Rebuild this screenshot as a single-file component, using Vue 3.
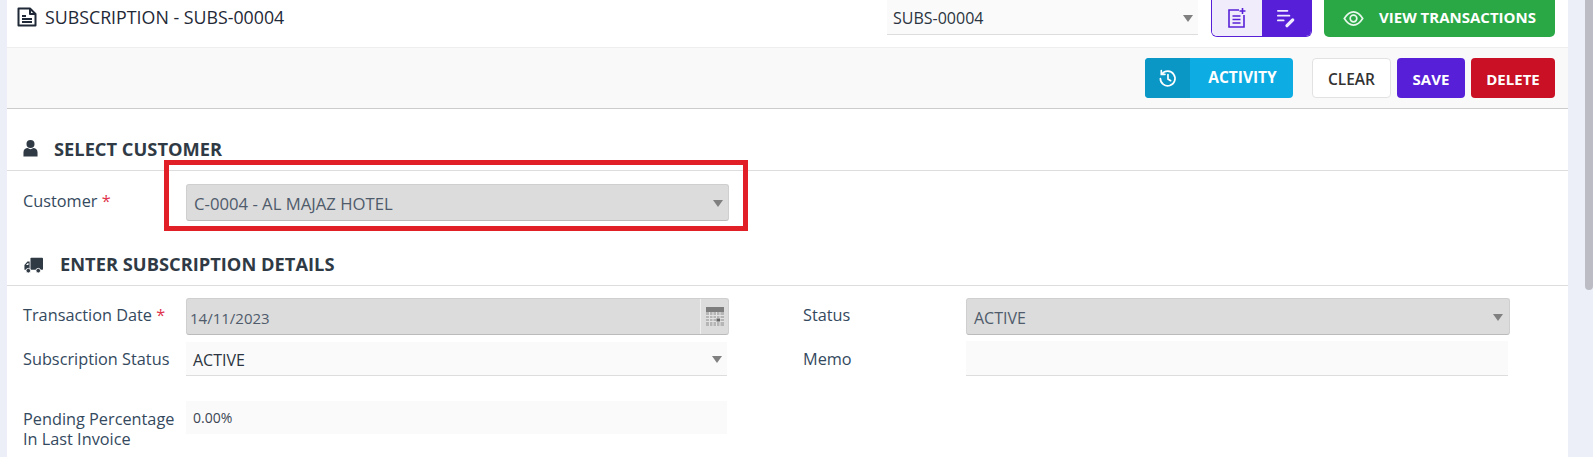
<script setup>
</script>

<template>
  <div class="page">
    <div class="edge"></div>
    <main class="main">
      <header class="top">
        <div class="title">
          <svg class="doc" viewBox="0 0 20 20" width="20" height="20" fill="none" stroke="#1f2937" stroke-width="2" stroke-linejoin="round">
            <path d="M1.500 1.500h11.500l5.500 5.500v11.500H1.500z" />
            <path d="M13 1.500V7h5.500" />
            <path d="M5 9h4M5 12h10M5 15h10" />
          </svg>
          <span>SUBSCRIPTION - SUBS-00004</span>
        </div>
        <div class="select plain top-select"><span>SUBS-00004</span><i class="caret"></i></div>
        <div class="toggle">
          <span class="tg-a">
            <svg viewBox="0 0 20 22" width="20" height="22" fill="none" stroke="#5720d8" stroke-width="1.6">
              <path d="M12 3H2v17h15V8" />
              <path d="M15.500 1v6M12.500 4h6M5.500 9h8M5.500 12.500h8M5.500 16h8" />
            </svg>
          </span>
          <span class="tg-b">
            <svg viewBox="0 0 22 22" width="21" height="21" fill="none" stroke="#f1ebff" stroke-width="1.900" stroke-linecap="round">
              <path d="M2 3h10M2 8h12M2 13h6" />
              <path d="M11.500 18.500l6-6" stroke-width="3.400" />
            </svg>
          </span>
        </div>
        <button class="btn green">
          <svg viewBox="0 0 24 18" width="21" height="17" fill="none" stroke="#e8f7ec" stroke-width="1.900">
            <path d="M1.500 9C5 3.500 8.500 1.500 12 1.500S19 3.500 22.500 9C19 14.500 15.500 16.500 12 16.500S5 14.500 1.500 9z" />
            <circle cx="12" cy="9" r="3.800" />
          </svg>
          <span class="green-text">VIEW TRANSACTIONS</span>
        </button>
      </header>

      <div class="toolbar">
        <button class="btn activity">
          <span class="ac-icon">
            <svg viewBox="0 0 20 20" width="19" height="19" fill="none" stroke="#fff" stroke-width="1.800" stroke-linecap="round">
              <path d="M4.200 5.200A7.700 7.700 0 1 1 2.500 10" />
              <path d="M3.500 1.800v3.800h3.800" />
              <path d="M10.500 6v4.500l2.800 1.800" />
            </svg>
          </span>
          <span class="ac-text">ACTIVITY</span>
        </button>
        <button class="btn clear">CLEAR</button>
        <button class="btn save">SAVE</button>
        <button class="btn delete">DELETE</button>
      </div>

      <section class="section-head head-one">
        <svg viewBox="0 0 16 18" width="15" height="18" fill="#2f3a45">
          <circle cx="8" cy="4.800" r="4.300" />
          <path d="M0.500 18v-4.500C.5 10.500 3 9 5 9c1 .8 2 1.200 3 1.200S10 9.800 11 9c2 0 4.500 1.500 4.500 4.500V18z" />
        </svg>
        <h2>SELECT CUSTOMER</h2>
      </section>

      <div class="row row-customer">
        <label class="lbl">Customer <em>*</em></label>
        <div class="field-wrap">
          <div class="select off"><span>C-0004 - AL MAJAZ HOTEL</span><i class="caret"></i></div>
          <div class="annotation"></div>
        </div>
      </div>

      <section class="section-head head-two">
        <svg class="truck" viewBox="0 0 22 18" width="19" height="17" fill="#2f3a45">
          <rect x="7.500" y="0" width="14.500" height="14" rx="1" />
          <path d="M6.500 4.500H4L0.500 8.500V14H6.500zM2.300 8.500L4.500 6H5.200v2.500z" fill-rule="evenodd" />
          <circle cx="5" cy="15" r="2.700" stroke="#fff" stroke-width="1" />
          <circle cx="16.500" cy="15" r="2.700" stroke="#fff" stroke-width="1" />
        </svg>
        <h2>ENTER SUBSCRIPTION DETAILS</h2>
      </section>

      <div class="row row-a">
        <label class="lbl">Transaction Date <em>*</em></label>
        <div class="select off date">
          <span>14/11/2023</span>
          <span class="cal">
            <svg viewBox="0 0 18 19" width="18" height="19">
              <rect width="18" height="19" fill="#b5b5b5" />
              <rect width="18" height="5" fill="#7d7d7d" />
              <path d="M0 8.500h18M0 11.500h18M0 14.500h18M3.500 5v14M7 5v14M10.500 5v14M14 5v14" stroke="#e2e2e2" stroke-width="1" />
              <rect x="10.500" y="11.500" width="3.500" height="3" fill="#666" />
            </svg>
          </span>
        </div>
        <label class="lbl second">Status</label>
        <div class="select off wide"><span>ACTIVE</span><i class="caret"></i></div>
      </div>

      <div class="row row-b">
        <label class="lbl">Subscription Status</label>
        <div class="select plain narrow"><span>ACTIVE</span><i class="caret"></i></div>
        <label class="lbl second memo-gap">Memo</label>
        <div class="select plain memo"></div>
      </div>

      <div class="row row-c">
        <label class="lbl two">Pending Percentage In Last Invoice</label>
        <div class="pct">0.00%</div>
      </div>
    </main>
    <aside class="gutter"><div class="thumb"></div></aside>
  </div>
</template>

<style>
html, body { margin: 0; height: 457px; overflow: hidden; background: #fff; }
</style>

<style scoped>
.page { display: flex; width: 1593px; height: 457px; overflow: hidden; font-family: "Open Sans", "Noto Sans", sans-serif; background: #eceff8; }
.edge { width: 7px; flex: none; }
.main { width: 1561px; flex: none; background: #fff; }
.gutter { flex: 1; display: flex; justify-content: flex-end; }
.thumb { width: 8px; height: 290px; background: #bcbdc4; border-radius: 0 0 4px 4px; }

.top { display: flex; align-items: flex-start; height: 47px; border-bottom: 1px solid #eee; padding-right: 13px; }
.title { display: flex; align-items: center; gap: 8px; margin: 6px 0 0 10px; flex: 1; font-size: 17.800px; color: #1f2937; height: 21px; }
.doc { flex: none; }

.select { box-sizing: border-box; display: flex; align-items: center; justify-content: space-between; font-size: 16px; }
.select.plain { background: #fafafa; border-bottom: 1px solid #ddd; color: #2b3440; }
.select.off { background: #dcdcdc; border: 1px solid #cfcfcf; border-bottom-color: #bbb; border-radius: 3px; color: #4f5b6b; }
.caret { width: 0; height: 0; border-left: 5.500px solid transparent; border-right: 5.500px solid transparent; border-top: 7px solid #808080; }

.top-select { width: 311px; height: 35px; margin-right: 13px; padding: 2px 5px 0 6px; }
.top-select span { font-size: 16px; }
.toggle { display: flex; width: 101px; height: 37px; margin-right: 12px; border: 1px solid #5720d8; border-top: 0; border-radius: 0 0 6px 6px; box-sizing: border-box; overflow: hidden; }
.tg-a, .tg-b { flex: 1; display: flex; align-items: center; justify-content: center; }
.tg-a { background: #f1ecfb; }
.tg-b { background: #5720d8; }

.btn { border: 0; font-family: inherit; font-size: 15px; font-weight: 700; color: #fff; display: flex; align-items: center; justify-content: center; border-radius: 4px; padding: 0; box-sizing: border-box; }
.green { width: 231px; height: 37px; background: #2aa845; gap: 15px; border-radius: 0 0 5px 5px; }
.green-text { padding-bottom: 3px; }

.toolbar { display: flex; align-items: center; justify-content: flex-end; height: 60px; background: #f9f9f9; border-bottom: 1px solid #ccc; padding-right: 13px; }
.toolbar .btn { height: 40px; }
.activity { width: 148px; background: #0dace3; margin-right: 19px; overflow: hidden; justify-content: flex-start; }
.ac-icon { width: 45px; height: 100%; background: #0a97c6; display: flex; align-items: center; justify-content: center; }
.ac-text { flex: 1; text-align: center; padding: 0 0 3px 2px; font-size: 15.500px; }
.toolbar .clear { width: 79px; background: #fff; border: 1px solid #e2e2e2; color: #333; font-weight: 600; font-size: 15.500px; margin-right: 6px; padding-top: 2px; }
.save { width: 68px; background: #5720d8; margin-right: 6px; padding-top: 2px !important; }
.delete { width: 84px; background: #c91025; padding-top: 2px !important; }

.section-head { display: flex; align-items: center; border-bottom: 1px solid #ddd; padding-left: 16px; box-sizing: border-box; }
.section-head h2 { margin: 0; font-size: 18.300px; font-weight: 700; color: #2f3a45; }
.head-one { height: 62px; gap: 16px; padding-top: 17px; }
.head-two { height: 44px; gap: 17px; padding-left: 17px; }
.truck { margin-top: 4px; }

.row { display: flex; padding-left: 16px; }
.lbl { width: 163px; flex: none; font-size: 16.300px; color: #34495e; line-height: 20px; }
.lbl em { font-style: normal; color: #e0334c; }
.row-customer { padding-top: 13px; height: 58px; }
.row-customer .lbl { padding-top: 7px; }
.field-wrap { position: relative; width: 543px; height: 37px; }
.field-wrap .select { height: 37px; padding: 1px 5px 0 7px; }
.field-wrap .select span { font-size: 16.700px; font-weight: 500; }
.annotation { position: absolute; left: -22px; top: -24px; width: 584px; height: 71px; border: 5.500px solid #e01f26; box-sizing: border-box; pointer-events: none; }

.row-a { padding-top: 12px; }
.row-a .lbl { padding-top: 7px; }
.date { width: 543px; height: 37px; padding-left: 3px; font-size: 15px; }
.date > span:first-child { padding-top: 2px; }
.cal { width: 27px; height: 100%; border-left: 1px solid #efefef; display: flex; align-items: center; justify-content: center; }
.second { margin-left: 74px; }
.wide { width: 544px; height: 37px; padding: 2px 6px 0 7px; font-weight: 500; }
.row-b { padding-top: 6px; align-items: flex-end; }
.row-b .lbl { align-self: flex-start; padding-top: 8px; }
.narrow { width: 541px; height: 34px; padding: 2px 5px 0 7px; color: #2b3440; font-weight: 500; }
.memo-gap { margin-left: 76px; }
.memo { width: 542px; height: 35px; }
.row-c { padding-top: 25px; }
.two { padding-top: 8px; width: 163px; white-space: normal; }
.pct { width: 541px; height: 33px; background: #fafafa; font-size: 14px; color: #3c4654; box-sizing: border-box; padding: 7px 7px; }
</style>
